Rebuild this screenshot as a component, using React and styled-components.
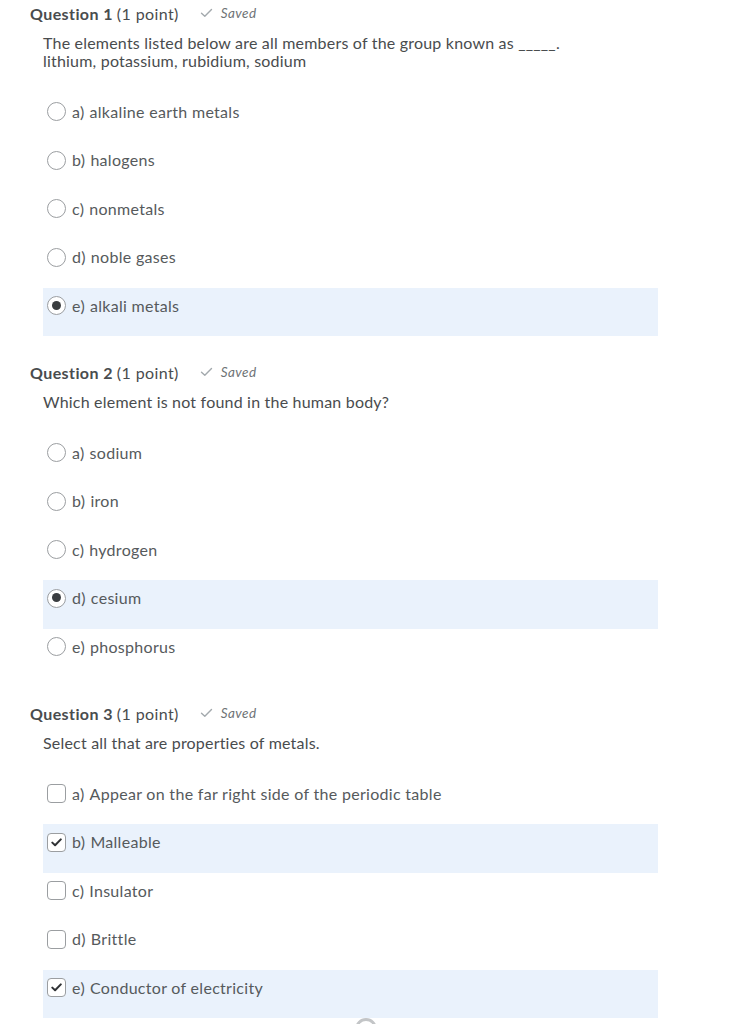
import React from 'react';
import styled, { createGlobalStyle } from 'styled-components';

const GlobalStyle = createGlobalStyle`
  body {
    margin: 0;
    background: #fff;
    font-family: Lato, "Open Sans", sans-serif;
    color: #494c4e;
  }
`;

const questions = [
  {
    num: 1,
    type: 'radio',
    text: ['The elements listed below are all members of the group known as _____.', 'lithium, potassium, rubidium, sodium'],
    options: [
      { label: 'a)', text: 'alkaline earth metals' },
      { label: 'b)', text: 'halogens' },
      { label: 'c)', text: 'nonmetals' },
      { label: 'd)', text: 'noble gases' },
      { label: 'e)', text: 'alkali metals', checked: true },
    ],
  },
  {
    num: 2,
    type: 'radio',
    text: ['Which element is not found in the human body?'],
    options: [
      { label: 'a)', text: 'sodium' },
      { label: 'b)', text: 'iron' },
      { label: 'c)', text: 'hydrogen' },
      { label: 'd)', text: 'cesium', checked: true },
      { label: 'e)', text: 'phosphorus' },
    ],
  },
  {
    num: 3,
    type: 'checkbox',
    text: ['Select all that are properties of metals.'],
    options: [
      { label: 'a)', text: 'Appear on the far right side of the periodic table' },
      { label: 'b)', text: 'Malleable', checked: true },
      { label: 'c)', text: 'Insulator' },
      { label: 'd)', text: 'Brittle' },
      { label: 'e)', text: 'Conductor of electricity', checked: true },
    ],
  },
];

const Page = styled.div`
  width: 628px;
  padding: 3px 0 0 30px;
`;

const Question = styled.section`
  & + & {
    margin-top: 26px;
  }
`;

const Heading = styled.div`
  display: flex;
  align-items: center;
  height: 20px;
  font-size: 16px;
  letter-spacing: 0.4px;
  color: #494c4e;
`;

const Title = styled.span`
  font-weight: 700;
`;

const Points = styled.span`
  margin-left: 4px;
`;

const Saved = styled.span`
  display: flex;
  align-items: center;
  margin-left: 21px;
  font-size: 13.5px;
  letter-spacing: 0.4px;
  font-style: italic;
  color: #6e7376;

  svg {
    margin-right: 8px;
  }
`;

const Prompt = styled.div`
  margin: 11px 0 0 13px;
  font-size: 16px;
  letter-spacing: 0.2px;
  line-height: 18px;
  color: #494c4e;
`;

const Options = styled.div`
  margin: 23.5px 0 0 13px;
`;

const Row = styled.label`
  display: flex;
  align-items: flex-start;
  height: 48.5px;
  box-sizing: border-box;
  padding: 8px 0 0 4px;
  font-size: 16px;
  letter-spacing: 0.3px;
  line-height: 20px;
  color: #565a5c;
  background: ${(p) => (p.$checked ? '#eaf2fc' : 'transparent')};
`;

const Radio = styled.span`
  position: relative;
  flex: none;
  width: 19px;
  height: 19px;
  box-sizing: border-box;
  margin: 0.5px 6px 0 0;
  border: 1.5px solid #9b9ea1;
  border-radius: 50%;
  background: #fff;

  &::after {
    content: '';
    display: ${(p) => (p.$checked ? 'block' : 'none')};
    position: absolute;
    left: 3.5px;
    top: 3.5px;
    width: 9px;
    height: 9px;
    border-radius: 50%;
    background: #3a3d40;
  }
`;

const Box = styled.span`
  display: flex;
  align-items: center;
  justify-content: center;
  flex: none;
  width: 19px;
  height: 19px;
  box-sizing: border-box;
  margin: 0.5px 6px 0 0;
  border: 1.5px solid #9b9ea1;
  border-radius: 4px;
  background: #fff;
`;

const Letter = styled.span`
  margin-right: 5px;
`;

const Spinner = styled.div`
  width: 22px;
  height: 22px;
  box-sizing: border-box;
  margin: 0 0 0 325px;
  border: 3px solid #c3c5c7;
  border-radius: 50%;
`;

const Check = () => (
  <svg width="13" height="10" viewBox="0 0 13 10">
    <path d="M1.5 5.2 L4.8 8.3 L11.5 1.5" fill="none" stroke="#a3a9ad" strokeWidth="1.4" strokeLinecap="round" strokeLinejoin="round" />
  </svg>
);

const BoxTick = () => (
  <svg width="11" height="9" viewBox="0 0 11 9">
    <path d="M1.3 4.6 L4.1 7.3 L9.8 1.4" fill="none" stroke="#2f3235" strokeWidth="2" strokeLinecap="round" strokeLinejoin="round" />
  </svg>
);

export default function App() {
  return (
    <Page>
      <GlobalStyle />
      {questions.map((q) => (
        <Question key={q.num}>
          <Heading>
            <Title>Question {q.num}</Title>
            <Points>(1 point)</Points>
            <Saved>
              <Check />
              Saved
            </Saved>
          </Heading>
          <Prompt>
            {q.text.map((line) => (
              <div key={line}>{line}</div>
            ))}
          </Prompt>
          <Options>
            {q.options.map((o) => (
              <Row key={o.label} $checked={o.checked}>
                {q.type === 'radio' ? (
                  <Radio $checked={o.checked} />
                ) : (
                  <Box>{o.checked && <BoxTick />}</Box>
                )}
                <Letter>{o.label}</Letter>
                {o.text}
              </Row>
            ))}
          </Options>
        </Question>
      ))}
      <Spinner />
    </Page>
  );
}
